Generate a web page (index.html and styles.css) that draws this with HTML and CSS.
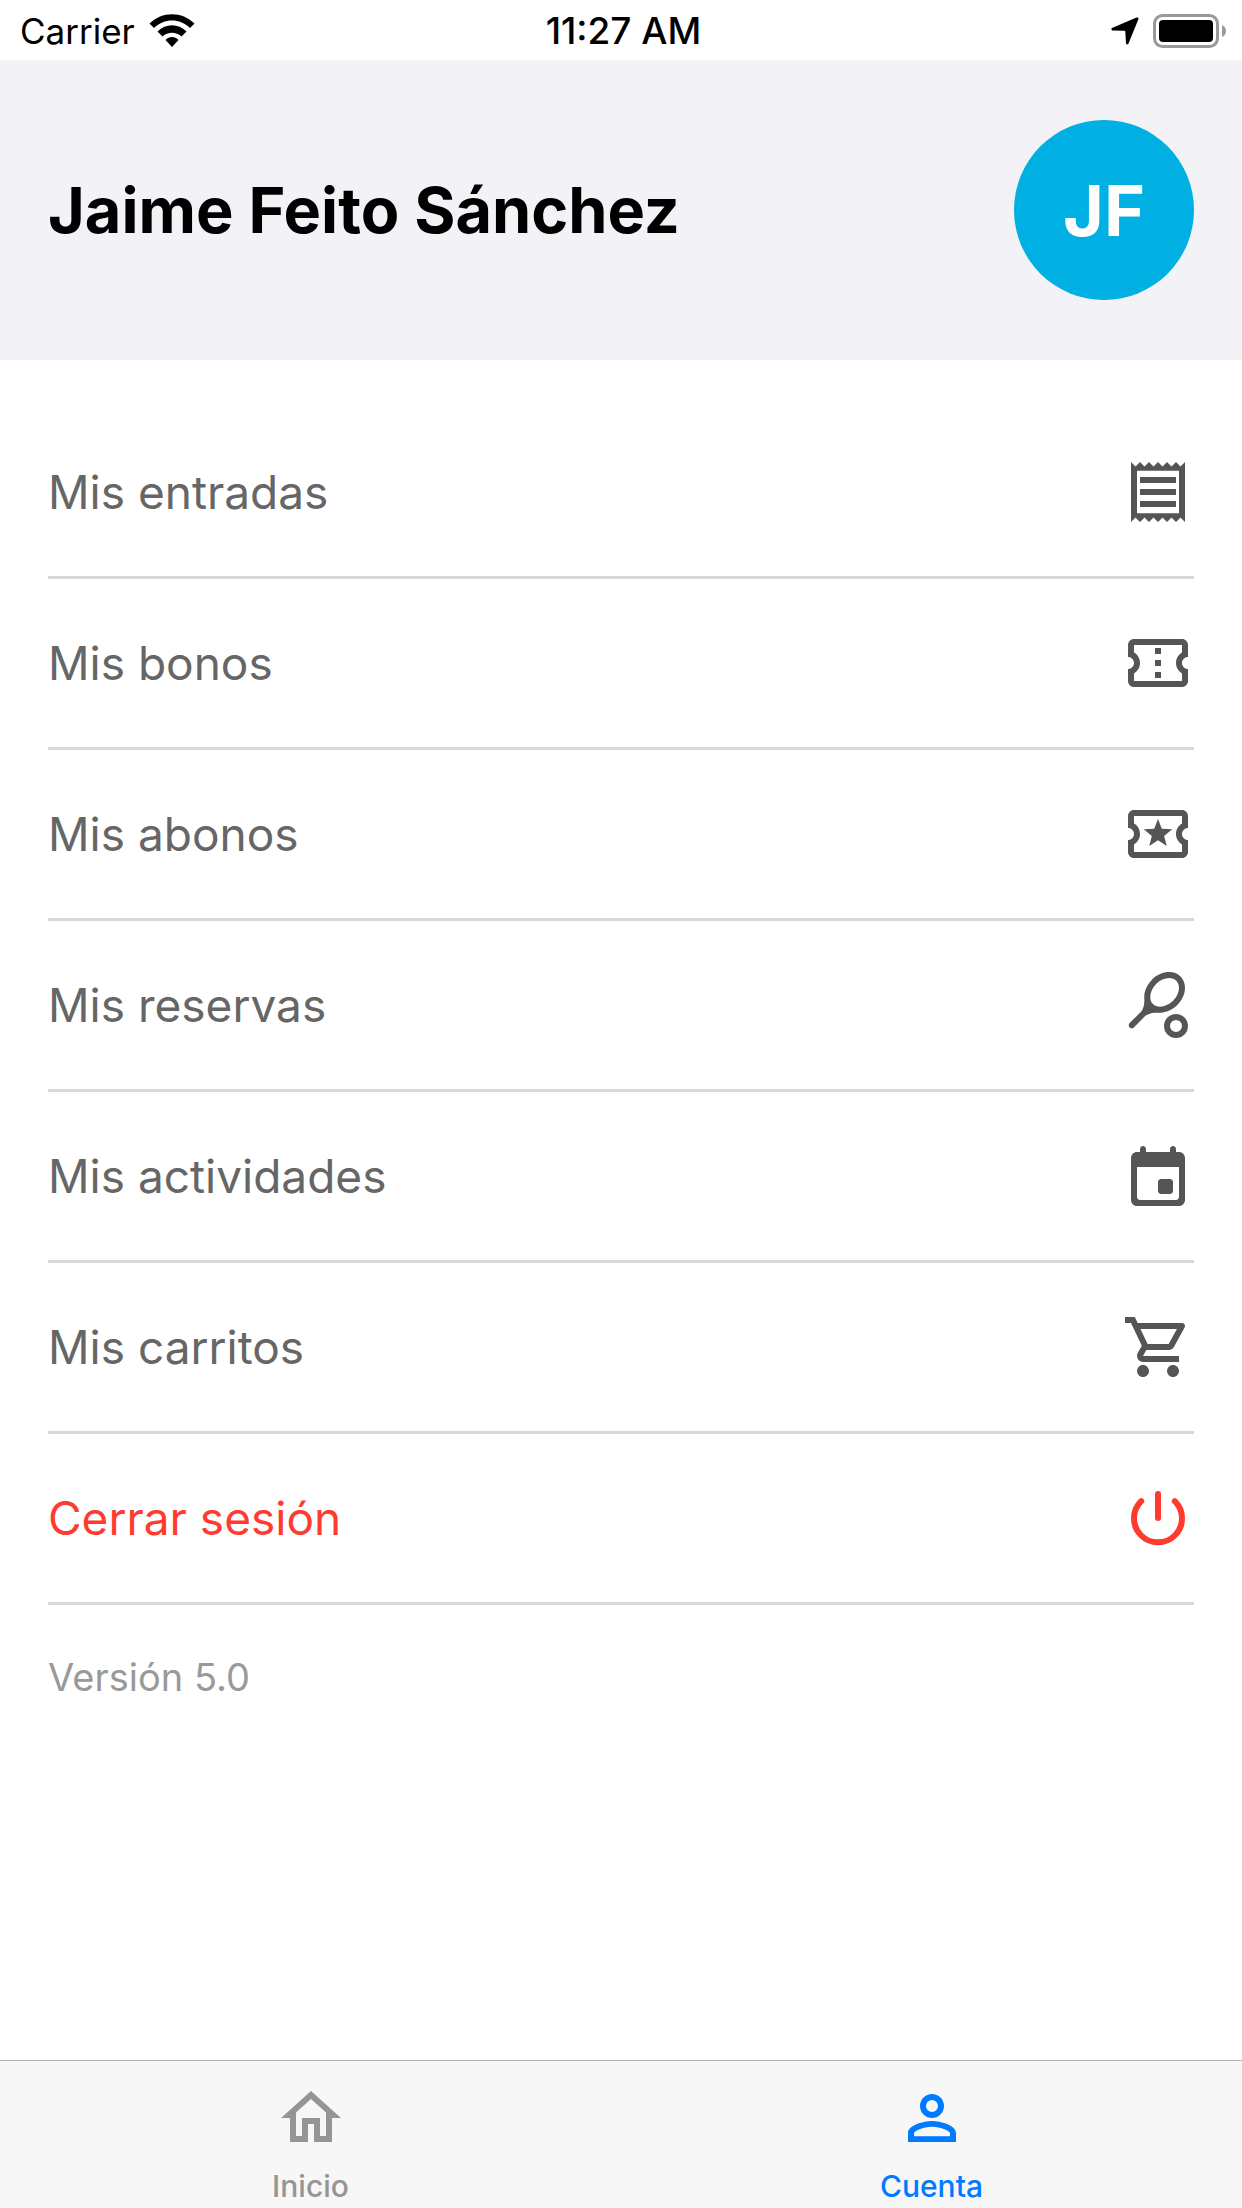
FILE: index.html
```html
<!DOCTYPE html>
<html lang="es">
<head>
<meta charset="utf-8">
<meta name="viewport" content="width=device-width, initial-scale=1">
<title>Cuenta</title>
<link rel="stylesheet" href="styles.css">
</head>
<body>
<div class="status-bar">
  <div class="status-left">
    <span>Carrier</span>
    <svg class="wifi" viewBox="0 0 46 34" aria-hidden="true">
      <path d="M0.500 9.500C13 -3 33 -3 45.500 9.500L41 14C31 4 15 4 5 14Z"/>
      <path d="M8.500 17.500C17 9 29 9 37.500 17.500L32.500 22.500C27 17.500 19 17.500 13.500 22.500Z"/>
      <path d="M16.500 26C20 22 26 22 29.500 26L23 33Z"/>
    </svg>
  </div>
  <time class="clock">11:27 AM</time>
  <div class="status-right">
    <svg class="location" viewBox="0 0 28 28" aria-hidden="true">
      <path d="M25.500 0.500Q28 0 27.300 2.500L17.500 26.500Q16 28.500 15 26.500L14.300 14.500Q14.200 13.700 13.400 13.700L1.500 13.500Q-0.500 12.500 1 11Z"/>
    </svg>
    <svg class="battery" viewBox="0 0 74 34" aria-hidden="true">
      <rect x="1.500" y="1.500" width="63" height="31" rx="8" fill="none" stroke="#999" stroke-width="3"/>
      <rect x="6" y="6" width="54" height="22" rx="4"/>
      <path d="M69 11Q73 13 73 17T69 23Z" fill="#999"/>
    </svg>
  </div>
</div>

<header class="profile">
  <h1 class="profile-name">Jaime Feito Sánchez</h1>
  <div class="avatar">JF</div>
</header>

<main class="content">
  <ul class="menu">
    <li class="menu-item"><a class="menu-action" href="#entradas">Mis entradas
      <svg class="icon" viewBox="0 0 24 24" aria-hidden="true"><path d="M19.500 3.500L18 2l-1.500 1.500L15 2l-1.500 1.500L12 2l-1.500 1.500L9 2 7.500 3.500 6 2 4.500 3.500 3 2v20l1.500-1.500L6 22l1.500-1.500L9 22l1.500-1.500L12 22l1.500-1.500L15 22l1.500-1.500L18 22l1.500-1.500L21 22V2l-1.500 1.500zM19 19.090H5V4.910h14v14.180zM6 15h12v2H6zm0-4h12v2H6zm0-4h12v2H6z"/></svg></a></li>
    <li class="menu-item"><a class="menu-action" href="#bonos">Mis bonos
      <svg class="icon" viewBox="0 0 24 24" aria-hidden="true"><path d="M22 10V6c0-1.110-.9-2-2-2H4c-1.100 0-1.990.89-1.990 2v4c1.100 0 1.990.9 1.990 2s-.89 2-2 2v4c0 1.100.9 2 2 2h16c1.100 0 2-.9 2-2v-4c-1.100 0-2-.9-2-2s.9-2 2-2zm-2-1.460c-1.190.69-2 1.990-2 3.460s.81 2.770 2 3.460V18H4v-2.540c1.190-.69 2-1.990 2-3.460 0-1.480-.8-2.770-1.990-3.460L4 6h16v2.540zM11 15h2v2h-2zm0-4h2v2h-2zm0-4h2v2h-2z"/></svg></a></li>
    <li class="menu-item"><a class="menu-action" href="#abonos">Mis abonos
      <svg class="icon" viewBox="0 0 24 24" aria-hidden="true"><path d="M22 10V6c0-1.110-.9-2-2-2H4c-1.100 0-1.990.89-1.990 2v4c1.100 0 1.990.9 1.990 2s-.89 2-2 2v4c0 1.100.9 2 2 2h16c1.100 0 2-.9 2-2v-4c-1.100 0-2-.9-2-2s.9-2 2-2zm-2-1.460c-1.190.69-2 1.990-2 3.460s.81 2.770 2 3.460V18H4v-2.540c1.190-.69 2-1.990 2-3.460 0-1.480-.8-2.770-1.990-3.460L4 6h16v2.540zM9.070 16L12 14.120 14.930 16l-.89-3.360 2.690-2.200-3.470-.21L12 7l-1.270 3.220-3.470.21 2.690 2.200z"/></svg></a></li>
    <li class="menu-item"><a class="menu-action" href="#reservas">Mis reservas
      <svg class="icon" viewBox="0 0 24 24" aria-hidden="true"><path d="M19.520 2.490c-2.340-2.340-6.620-1.870-9.550 1.060-1.600 1.600-2.520 3.870-2.540 5.460-.02 1.580.26 3.890-1.350 5.500l-3.540 3.530c-.39.39-.39 1.020 0 1.420.39.39 1.020.39 1.410 0l3.530-3.540c1.610-1.610 3.920-1.330 5.500-1.350s3.860-.94 5.460-2.540c2.930-2.920 3.410-7.200 1.080-9.540zm-9.200 9.190c-1.530-1.530-1.050-4.610 1.060-6.720s5.180-2.590 6.720-1.060c1.530 1.530 1.050 4.610-1.060 6.720s-5.180 2.590-6.720 1.060z"/><circle cx="18" cy="19" r="3" fill="none" stroke="currentColor" stroke-width="2"/></svg></a></li>
    <li class="menu-item"><a class="menu-action" href="#actividades">Mis actividades
      <svg class="icon" viewBox="0 0 24 24" aria-hidden="true"><path d="M16 13h-3c-.55 0-1 .45-1 1v3c0 .55.45 1 1 1h3c.55 0 1-.45 1-1v-3c0-.55-.45-1-1-1zm0-10v1H8V3c0-.55-.45-1-1-1s-1 .45-1 1v1H5c-1.110 0-1.990.9-1.990 2L3 20c0 1.100.89 2 2 2h14c1.100 0 2-.9 2-2V6c0-1.100-.9-2-2-2h-1V3c0-.55-.45-1-1-1s-1 .45-1 1zm2 17H6c-.55 0-1-.45-1-1V9h14v10c0 .55-.45 1-1 1z"/></svg></a></li>
    <li class="menu-item"><a class="menu-action" href="#carritos">Mis carritos
      <svg class="icon" viewBox="0 0 24 24" aria-hidden="true"><path d="M15.550 13c.75 0 1.410-.41 1.750-1.030l3.580-6.490c.37-.66-.11-1.480-.87-1.480H5.210l-.94-2H1v2h2l3.600 7.590-1.350 2.440C4.520 15.370 5.480 17 7 17h12v-2H7l1.100-2h7.450zM6.160 6h12.150l-2.760 5H8.530L6.160 6zM7 18c-1.100 0-1.990.9-1.990 2S5.900 22 7 22s2-.9 2-2-.9-2-2-2zm10 0c-1.100 0-1.990.9-1.990 2s.89 2 1.990 2 2-.9 2-2-.9-2-2-2z"/></svg></a></li>
    <li class="menu-item"><button class="menu-action menu-action-danger" type="button">Cerrar sesión
      <svg class="icon" viewBox="0 0 24 24" aria-hidden="true"><path d="M12 4v8M6.400 6.400A8 8 0 1 0 17.600 6.400" fill="none" stroke="currentColor" stroke-width="2" stroke-linecap="round"/></svg></button></li>
  </ul>
  <p class="version">Versión 5.0</p>
</main>

<nav class="tab-bar">
  <a class="tab" href="#inicio">
    <svg class="icon" viewBox="0 0 24 24" aria-hidden="true"><path d="M12 5.690l5 4.500V18h-2v-6H9v6H7v-7.810l5-4.500M12 3L2 12h3v8h6v-6h2v6h6v-8h3L12 3z"/></svg>
    <span>Inicio</span>
  </a>
  <a class="tab tab-active" href="#cuenta" aria-current="page">
    <svg class="icon" viewBox="0 0 24 24" aria-hidden="true"><path fill-rule="evenodd" d="M12 4a4 4 0 0 1 0 8a4 4 0 0 1 0-8M12 6a2 2 0 0 0 0 4a2 2 0 0 0 0-4M12 13C14.670 13 20 14.330 20 17V20H4V17C4 14.330 9.330 13 12 13M12 14.900C9.030 14.900 6 16.360 6 17V18.100H18V17C18 16.360 14.970 14.900 12 14.900Z"/></svg>
    <span>Cuenta</span>
  </a>
</nav>
</body>
</html>
```

FILE: styles.css
```css
* {
  box-sizing: border-box;
}

body {
  display: flex;
  flex-direction: column;
  min-height: 100vh;
  margin: 0;
  background: #fff;
  color: #000;
  font-family: Inter, "Liberation Sans", sans-serif;
}

svg {
  display: block;
  flex: none;
  fill: currentColor;
}

.status-bar {
  display: grid;
  grid-template-columns: 1fr auto 1fr;
  align-items: center;
  height: 60px;
  padding: 0 15px 0 20px;
  font-size: 35px;
  line-height: 62px;
}

.status-left,
.status-right {
  display: flex;
  align-items: center;
  gap: 14px;
}

.status-right {
  justify-content: flex-end;
}

.wifi {
  width: 46px;
  height: 34px;
}

.clock {
  font-size: 37px;
  font-weight: 500;
}

.location {
  width: 28px;
  height: 28px;
}

.battery {
  width: 74px;
  height: 34px;
}

.profile {
  display: flex;
  align-items: center;
  justify-content: space-between;
  gap: 24px;
  padding: 60px 48px;
  background: #f2f2f7;
}

.profile-name {
  margin: 0;
  font-size: 63px;
  font-weight: 700;
  line-height: 80px;
}

.avatar {
  flex: none;
  width: 180px;
  height: 180px;
  border-radius: 50%;
  background: #00b0e3;
  color: #fff;
  font-size: 70px;
  font-weight: 700;
  line-height: 182px;
  text-align: center;
}

.content {
  flex: 1;
  padding: 48px;
}

.menu {
  margin: 0;
  padding: 0;
  list-style: none;
}

.menu-item {
  border-bottom: 3px solid #d8d8d8;
}

.menu-action {
  display: flex;
  align-items: center;
  justify-content: space-between;
  width: 100%;
  padding: 48px 0;
  border: 0;
  background: none;
  color: #666;
  font: inherit;
  font-size: 46px;
  line-height: 72px;
  text-align: left;
  text-decoration: none;
}

.icon {
  width: 72px;
  height: 72px;
}

.menu-action .icon {
  color: #555;
}

.menu-action-danger,
.menu-action-danger .icon {
  color: #ff3b30;
}

.version {
  margin: 48px 0 0;
  color: #999;
  font-size: 38px;
  line-height: 48px;
}

.tab-bar {
  display: grid;
  grid-template-columns: 1fr 1fr;
  border-top: 1px solid #b2b2b2;
  background: #f7f7f7;
}

.tab {
  display: flex;
  flex-direction: column;
  align-items: center;
  gap: 14px;
  padding: 21px 0 4px;
  color: #959595;
  font-size: 30px;
  font-weight: 500;
  line-height: 36px;
  text-decoration: none;
}

.tab-active {
  color: #007aff;
}
```
